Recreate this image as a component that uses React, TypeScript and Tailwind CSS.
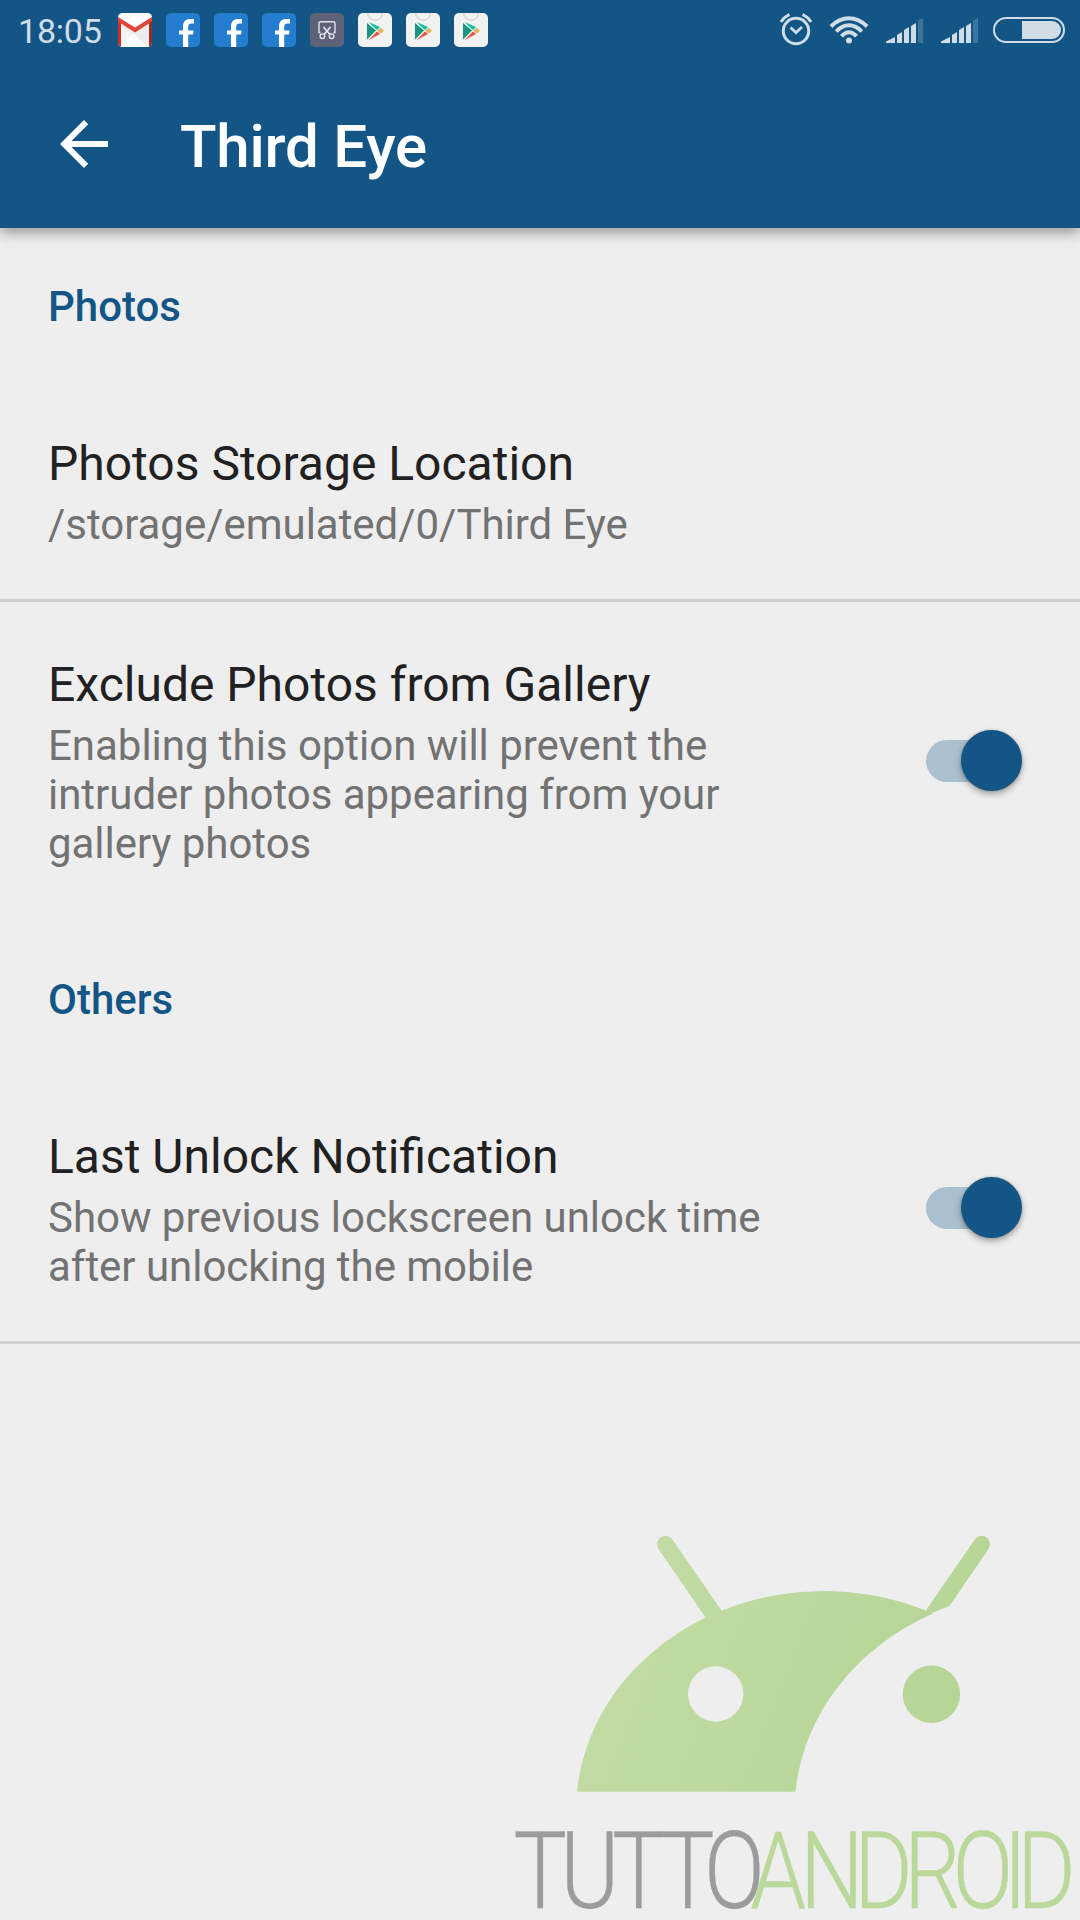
import React from "react";

function GmailIcon() {
  return (
    <svg width="34" height="34" viewBox="0 0 34 34">
      <clipPath id="gm"><rect width="34" height="34" rx="4.5" /></clipPath>
      <g clipPath="url(#gm)">
        <rect width="34" height="34" fill="#fff" />
        <path d="M3 9L17 19L31 9V34H28L13 22L3 14Z" fill="#ececec" />
        <path d="M3 13L14 21L3 32Z" fill="#f4f4f4" />
        <path d="M3 32L16 20L29 34H3Z" fill="#fcfcfc" />
        <path d="M0 7H3V34H0Z" fill="#c9302c" />
        <path d="M31 7H34V34H31Z" fill="#9c2b25" />
        <path d="M0 4L17 14.5L34 4V8.5L17 19.5L0 8.5Z" fill="#de4537" />
      </g>
    </svg>
  );
}

function FacebookIcon() {
  return (
    <svg width="34" height="34" viewBox="0 0 34 34">
      <rect width="34" height="34" rx="5" fill="#257dd0" />
      <path d="M17 34V21.500H13V17.500H17V13.500C17 8.500 19.500 6 24 6H28V10.500H25.500C23 10.500 22.200 12 22.200 14V17.500H27.500L27 21.500H22.200V34Z" fill="#fff" />
    </svg>
  );
}

function ScissorsIcon() {
  return (
    <svg width="34" height="34" viewBox="0 0 34 34" fill="none" stroke="#e2e4ea" strokeWidth="1.4">
      <rect width="34" height="34" rx="5" fill="#5d6279" stroke="none" />
      <path d="M10.500 19.500H9V10.500Q9 8.800 10.700 8.800H23.300Q25 8.800 25 10.500V19.500H23.500" />
      <path d="M13.500 14L20 21.500M20.500 14L14 21.500" strokeWidth="1.7" />
      <circle cx="12.400" cy="23.200" r="2.300" />
      <circle cx="21.600" cy="23.200" r="2.300" />
    </svg>
  );
}

function PlayIcon() {
  return (
    <svg width="34" height="34" viewBox="0 0 34 34">
      <rect width="34" height="34" rx="5" fill="#f2f2f2" />
      <path d="M9.500 0C10 9.500 24 9.500 24.500 0" fill="none" stroke="#cccccc" strokeWidth="1.2" />
      <path d="M9 10V26.500L18 17.500Z" fill="#17987e" />
      <path d="M10.500 9L22 14L19 17Z" fill="#0fbf9b" />
      <path d="M10.500 27L22 21L19 18.500Z" fill="#e8503f" />
      <path d="M19.500 17.700L22.500 14.800L26 17.700L22.500 20.600Z" fill="#ebae55" />
    </svg>
  );
}

function AlarmIcon() {
  return (
    <svg width="34" height="34" viewBox="0 0 34 34" fill="none" stroke="#d0dde6" strokeWidth="3">
      <circle cx="17" cy="18" r="12.700" />
      <path d="M11.500 14.500L17 19.500L23 14" strokeWidth="2.800" />
      <path d="M2 9Q5 4 10.500 1.500M32 9Q29 4 23.500 1.500" strokeWidth="3" />
    </svg>
  );
}

function WifiIcon() {
  return (
    <svg width="40" height="30" viewBox="0 0 40 30" fill="none" stroke="#d0dde6" strokeWidth="4">
      <path d="M2 11.500Q10 3.300 20 3.300T38 11.500" />
      <path d="M7.200 16.500Q13 10.300 20 10.300T32.800 16.500" />
      <path d="M12.500 21.300Q16 17.200 20 17.200T27.500 21.300" />
      <circle cx="20" cy="25.500" r="3" fill="#d0dde6" stroke="none" />
    </svg>
  );
}

function SignalIcon() {
  return (
    <svg width="37" height="25" viewBox="0 0 37 25" fill="#d0dde6">
      <path d="M0 25V23.500L9 19V25ZM11 25V17L16 14V25ZM18 25V12L23 9V25ZM25 25V8L30 5V25Z" />
      <path d="M32 25V2.500L37 0V25Z" opacity=".22" />
    </svg>
  );
}

function BatteryIcon() {
  return (
    <svg width="72" height="26" viewBox="0 0 72 26">
      <rect x="1" y="1" width="70" height="24" rx="12" fill="none" stroke="#d0dde6" strokeWidth="2" />
      <path d="M29 4H59A9 9 0 0 1 59 22H29Z" fill="#d0dde6" />
    </svg>
  );
}

function StatusBar() {
  return (
    <div className="flex h-[60px] items-center pl-[18px] pr-[15px]">
      <span className="w-[100px] text-[34px] leading-[40px] tracking-[-0.2px] text-[#d0dde6] mt-[2px]">18:05</span>
      <div className="flex gap-[14px]">
        <GmailIcon />
        <FacebookIcon />
        <FacebookIcon />
        <FacebookIcon />
        <ScissorsIcon />
        <PlayIcon />
        <PlayIcon />
        <PlayIcon />
      </div>
      <div className="ml-auto flex items-center">
        <AlarmIcon />
        <span className="ml-4 mr-[17px]"><WifiIcon /></span>
        <span className="mr-[18px] mt-px"><SignalIcon /></span>
        <span className="mr-[15px] mt-px"><SignalIcon /></span>
        <BatteryIcon />
      </div>
    </div>
  );
}

function Header() {
  return (
    <header className="relative h-[228px] bg-[#135686] shadow-[0_5px_12px_rgba(0,0,0,0.35)]">
      <StatusBar />
      <div className="flex h-[168px] items-center pl-12">
        <svg width="72" height="72" viewBox="0 0 24 24" fill="#fff">
          <path d="M20 11H7.830l5.590-5.590L12 4l-8 8 8 8 1.410-1.410L7.830 13H20v-2z" />
        </svg>
        <h1 className="ml-[60px] mt-[5px] text-[60px] font-medium leading-[70px] tracking-[-0.2px] text-white">Third Eye</h1>
      </div>
    </header>
  );
}

function Switch() {
  return (
    <div className="relative flex h-[60px] w-[96px] items-center">
      <div className="h-[42px] w-[82px] rounded-full bg-[#abc0cf]" />
      <div className="absolute right-0 top-[-1px] size-[61px] rounded-full bg-[#135686] shadow-[0_3px_6px_rgba(0,0,0,0.35),0_0_2px_rgba(0,0,0,0.2)]" />
    </div>
  );
}

function SectionTitle({ children }: { children: React.ReactNode }) {
  return <h2 className="px-12 text-[42px] font-medium leading-[49px] text-[#135686]">{children}</h2>;
}

function Preference({ title, lines, toggle }: { title: string; lines: string[]; toggle?: boolean }) {
  return (
    <div className="flex items-center justify-between pl-12 pr-[58px]">
      <div>
        <div className="text-[48px] leading-[56px] text-[#212121]">{title}</div>
        <div className="mt-[8px] text-[42px] leading-[49px] tracking-[-0.03px] text-[#727272]">
          {lines.map((l) => <div key={l} className="whitespace-nowrap">{l}</div>)}
        </div>
      </div>
      {toggle && <div className="mb-[4px]"><Switch /></div>}
    </div>
  );
}

const SCALE = 0.83;
const BEARING: Record<string, number> = { T: 2.500, U: 8, O: 6, A: 1.500, N: 9.500, D: 9.500, R: 9.500, I: 11 };

function Word({ text, lefts, fill }: { text: string; lefts: number[]; fill: string }) {
  const xs = lefts.map((left, i) => left / SCALE - BEARING[text[i]]).join(" ");
  return (
    <text transform={`translate(0 1908) scale(${SCALE} 1)`} x={xs} fill={fill} stroke={fill} strokeWidth="0.4">{text}</text>
  );
}

function Logo() {
  return (
    <svg className="ml-[500px] block" width="580" height="420" viewBox="500 1500 580 420">
      <defs>
        <linearGradient id="lg" gradientUnits="userSpaceOnUse" x1="600" y1="1600" x2="930" y2="1730">
          <stop offset="0" stopColor="#c2dca4" />
          <stop offset="1" stopColor="#b7d597" />
        </linearGradient>
      </defs>
      <g fill="url(#lg)">
        <path fillRule="evenodd" d="M577 1791.700A247.700 220 0 0 1 933 1613.600A247.700 220 0 0 0 795.600 1791.700ZM688 1694a27.700 27.700 0 1 0 55.400 0a27.700 27.700 0 1 0 -55.400 0Z" />
        <path d="M658.100 1548.300A8.400 8.400 0 0 1 672 1539L721.200 1610L722 1625L705.300 1617.300Z" />
        <path d="M926.200 1610L975.100 1539A8.400 8.400 0 0 1 989 1548.300L949.500 1606Q938 1610 926.200 1616Z" />
        <circle cx="931.400" cy="1694.300" r="28.700" />
      </g>
      <g fontFamily="Roboto" fontWeight="300" fontSize="108">
        <Word text="TUTTO" lefts={[515.500, 567, 614, 663, 709]} fill="#9c9c9c" />
        <Word text="ANDROID" lefts={[751.500, 808, 862, 912, 957.500, 1012.500, 1025]} fill="#bad89a" />
      </g>
    </svg>
  );
}

export default function App() {
  return (
    <div className="flex h-[1920px] w-[1080px] flex-col overflow-hidden bg-[#eeeeee] font-['Roboto',sans-serif]">
      <Header />
      <main className="flex flex-1 flex-col">
        <section className="pt-[54px]">
          <SectionTitle>Photos</SectionTitle>
          <div className="mt-[105px] border-b-[3px] border-[#d0d0d0] pb-[50px]">
            <Preference title="Photos Storage Location" lines={["/storage/emulated/0/Third Eye"]} />
          </div>
          <div className="pt-[55px]">
            <Preference toggle title="Exclude Photos from Gallery" lines={["Enabling this option will prevent the", "intruder photos appearing from your", "gallery photos"]} />
          </div>
        </section>
        <section className="pt-[107px]">
          <SectionTitle>Others</SectionTitle>
          <div className="mt-[105px] border-b-[3px] border-[#d0d0d0] pb-[50px]">
            <Preference toggle title="Last Unlock Notification" lines={["Show previous lockscreen unlock time", "after unlocking the mobile"]} />
          </div>
        </section>
        <div className="mt-auto">
          <Logo />
        </div>
      </main>
    </div>
  );
}
